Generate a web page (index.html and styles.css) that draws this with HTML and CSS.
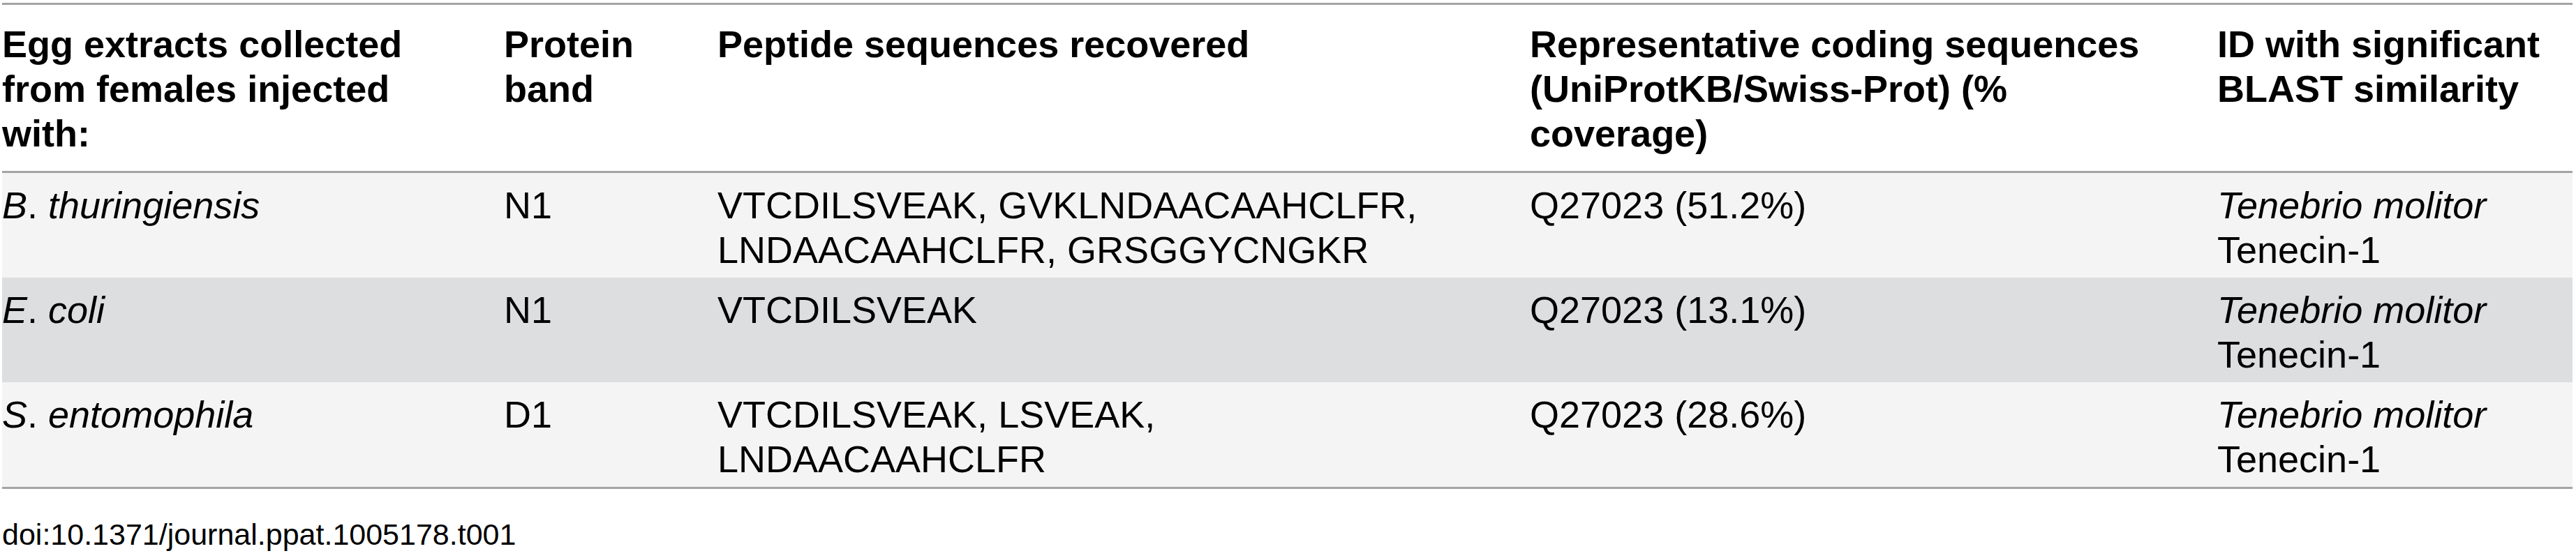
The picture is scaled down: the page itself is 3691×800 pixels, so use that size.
FILE: index.html
```html
<!DOCTYPE html>
<html>
<head>
<meta charset="utf-8">
<title>Table 1</title>
<link rel="stylesheet" href="styles.css">
</head>
<body>
<div class="page">
  <table class="data">
    <colgroup>
      <col class="w1">
      <col class="w2">
      <col class="w3">
      <col class="w4">
      <col class="w5">
    </colgroup>
    <thead>
      <tr>
        <th class="c1">Egg extracts collected from females injected with:</th>
        <th class="c2">Protein band</th>
        <th class="c3">Peptide sequences recovered</th>
        <th class="c4">Representative coding sequences (UniProtKB/Swiss-Prot) (% coverage)</th>
        <th class="c5">ID with significant BLAST similarity</th>
      </tr>
    </thead>
    <tbody>
      <tr class="light">
        <td class="c1"><i>B</i>. <i>thuringiensis</i></td>
        <td class="c2">N1</td>
        <td class="c3">VTCDILSVEAK, GVKLNDAACAAHCLFR, LNDAACAAHCLFR, GRSGGYCNGKR</td>
        <td class="c4">Q27023 (51.2%)</td>
        <td class="c5"><i>Tenebrio molitor</i> Tenecin-1</td>
      </tr>
      <tr class="dark">
        <td class="c1"><i>E</i>. <i>coli</i></td>
        <td class="c2">N1</td>
        <td class="c3">VTCDILSVEAK</td>
        <td class="c4">Q27023 (13.1%)</td>
        <td class="c5"><i>Tenebrio molitor</i> Tenecin-1</td>
      </tr>
      <tr class="light">
        <td class="c1"><i>S</i>. <i>entomophila</i></td>
        <td class="c2">D1</td>
        <td class="c3">VTCDILSVEAK, LSVEAK, LNDAACAAHCLFR</td>
        <td class="c4">Q27023 (28.6%)</td>
        <td class="c5"><i>Tenebrio molitor</i> Tenecin-1</td>
      </tr>
    </tbody>
  </table>
  <p class="doi">doi:10.1371/journal.ppat.1005178.t001</p>
</div>
</body>
</html>
```

FILE: styles.css
```css
html, body {
  margin: 0;
  padding: 0;
  background: #ffffff;
}

.page {
  padding: 4px 5px 0 3px;
  font-family: "Liberation Sans", Arial, Helvetica, sans-serif;
  color: #000000;
}

.data {
  width: 3683px;
  table-layout: fixed;
  border-collapse: collapse;
  border-top: 3px solid #a4a4a4;
  border-bottom: 3px solid #a4a4a4;
  font-size: 54px;
  line-height: 64px;
}

.w1 { width: 719px; }
.w2 { width: 306px; }
.w3 { width: 1164px; }
.w4 { width: 985px; }
.w5 { width: 509px; }

.data th {
  font-weight: bold;
  text-align: left;
  vertical-align: top;
  padding: 24px 60px 22px 0;
  background: #ffffff;
  border-bottom: 3px solid #a4a4a4;
}

.data td {
  text-align: left;
  vertical-align: top;
  padding: 14px 60px 8px 0;
}

.data .c3 { padding-right: 114px; }
.data .c4 { padding-right: 85px; }
.data .c5 { padding-right: 20px; }

.data i {
  font-style: italic;
}

.light td { background: #f4f4f4; }
.dark td { background: #dddee0; }

.doi {
  margin: 39px 0 0 0;
  font-size: 43px;
  line-height: 52px;
}
```
